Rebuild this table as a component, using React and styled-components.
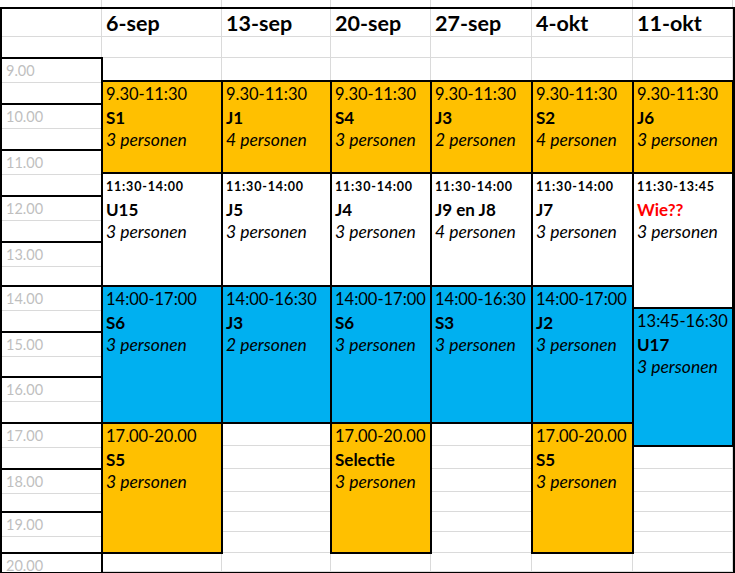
import styled, { createGlobalStyle } from "styled-components";

const GlobalStyle = createGlobalStyle`
  html, body {
    margin: 0;
    padding: 0;
    background: #fff;
  }
  body {
    font-family: Lato, "Open Sans", sans-serif;
    color: #000;
    overflow: hidden;
  }
`;

const GRID = "#dadada";
const COLS = "100px 120px 109px 100px 101px 101px 100px";
// heights of the half-hour rows, 9.00 down to 20.00
const ROWS = [23, 23, 23, 23, 23, 23, 23, 23, 21, 23, 22, 24, 23, 22, 23, 23, 23, 23, 23, 20, 20, 21, 19];
const FIRST = 3; // grid row of the 9.00 row

const tones = {
  orange: "#ffc000",
  white: "#ffffff",
  blue: "#00b0f0",
};

const hours = [9, 10, 11, 12, 13, 14, 15, 16, 17, 18, 19, 20];

const days = [
  {
    date: "6-sep",
    slots: [
      { tone: "orange", at: 1, span: 4, time: "9.30-11:30", who: "S1", count: "3 personen" },
      { tone: "white", at: 5, span: 5, time: "11:30-14:00", who: "U15", count: "3 personen" },
      { tone: "blue", at: 10, span: 6, time: "14:00-17:00", who: "S6", count: "3 personen" },
      { tone: "orange", at: 16, span: 6, time: "17.00-20.00", who: "S5", count: "3 personen" },
    ],
  },
  {
    date: "13-sep",
    slots: [
      { tone: "orange", at: 1, span: 4, time: "9.30-11:30", who: "J1", count: "4 personen" },
      { tone: "white", at: 5, span: 5, time: "11:30-14:00", who: "J5", count: "3 personen" },
      { tone: "blue", at: 10, span: 6, time: "14:00-16:30", who: "J3", count: "2 personen" },
    ],
  },
  {
    date: "20-sep",
    slots: [
      { tone: "orange", at: 1, span: 4, time: "9.30-11:30", who: "S4", count: "3 personen" },
      { tone: "white", at: 5, span: 5, time: "11:30-14:00", who: "J4", count: "3 personen" },
      { tone: "blue", at: 10, span: 6, time: "14:00-17:00", who: "S6", count: "3 personen" },
      { tone: "orange", at: 16, span: 6, time: "17.00-20.00", who: "Selectie", count: "3 personen" },
    ],
  },
  {
    date: "27-sep",
    slots: [
      { tone: "orange", at: 1, span: 4, time: "9.30-11:30", who: "J3", count: "2 personen" },
      { tone: "white", at: 5, span: 5, time: "11:30-14:00", who: "J9 en J8", count: "4 personen" },
      { tone: "blue", at: 10, span: 6, time: "14:00-16:30", who: "S3", count: "3 personen" },
    ],
  },
  {
    date: "4-okt",
    slots: [
      { tone: "orange", at: 1, span: 4, time: "9.30-11:30", who: "S2", count: "4 personen" },
      { tone: "white", at: 5, span: 5, time: "11:30-14:00", who: "J7", count: "3 personen" },
      { tone: "blue", at: 10, span: 6, time: "14:00-17:00", who: "J2", count: "3 personen" },
      { tone: "orange", at: 16, span: 6, time: "17.00-20.00", who: "S5", count: "3 personen" },
    ],
  },
  {
    date: "11-okt",
    slots: [
      { tone: "orange", at: 1, span: 4, time: "9.30-11:30", who: "J6", count: "3 personen" },
      { tone: "white", at: 5, span: 6, time: "11:30-13:45", who: "Wie??", alert: true, count: "3 personen" },
      { tone: "blue", at: 11, span: 6, time: "13:45-16:30", who: "U17", count: "3 personen" },
    ],
  },
];

export default function App() {
  return (
    <>
      <GlobalStyle />
      <TopStrip>
        {Array.from({ length: 7 }).map((_, i) => (
          <StripCell key={i} />
        ))}
      </TopStrip>
      <Sheet>
        <CornerCell $row={1} />
        <CornerCell $row={2} />

        {hours.map((h, i) => (
          <HourBox key={h} $row={FIRST + i * 2} $span={h === 20 ? 1 : 2}>
            <HalfRow $split={h !== 20}>
              <HourLabel>{h}.00</HourLabel>
            </HalfRow>
            {h !== 20 && <HalfRow />}
          </HourBox>
        ))}

        {days.map((day, d) => (
          <DayHead key={day.date} $col={d + 2}>
            {day.date}
          </DayHead>
        ))}
        {days.map((day, d) => (
          <Cell key={"b" + d} $col={d + 2} $row={2} />
        ))}
        {days.map((day, d) =>
          ROWS.map((_, r) => <Cell key={d + "-" + r} $col={d + 2} $row={FIRST + r} />)
        )}

        {days.map((day, d) =>
          day.slots.map((s) => (
            <Block key={day.date + s.at} $col={d + 2} $row={FIRST + s.at} $span={s.span} $tone={s.tone}>
              <TimeLine $compact={s.tone === "white"}>{s.time}</TimeLine>
              <WhoLine $alert={s.alert}>{s.who}</WhoLine>
              <CountLine>{s.count}</CountLine>
            </Block>
          ))
        )}
      </Sheet>
    </>
  );
}

const TopStrip = styled.div`
  display: grid;
  grid-template-columns: ${COLS};
  height: 7px;
  margin-left: 2px;
`;

const StripCell = styled.div`
  border-right: 1px solid ${GRID};
`;

const Sheet = styled.div`
  display: grid;
  grid-template-columns: ${COLS};
  grid-template-rows: 28px 21px ${ROWS.map((r) => r + "px").join(" ")};
  width: 731px;
  border: 2px solid #000;
`;

const Cell = styled.div`
  grid-column: ${(p) => p.$col};
  grid-row: ${(p) => p.$row};
  border-right: 1px solid ${GRID};
  border-bottom: 1px solid ${GRID};
`;

const CornerCell = styled.div`
  grid-column: 1;
  grid-row: ${(p) => p.$row};
  border-right: 1px solid ${GRID};
  border-bottom: 1px solid ${GRID};
`;

const DayHead = styled.div`
  grid-column: ${(p) => p.$col};
  grid-row: 1;
  border-right: 1px solid ${GRID};
  border-bottom: 1px solid ${GRID};
  padding-left: 4px;
  font-size: 21.5px;
  font-weight: 700;
  line-height: 28px;
  white-space: nowrap;
`;

const HourBox = styled.div`
  grid-column: 1;
  grid-row: ${(p) => p.$row} / span ${(p) => p.$span};
  margin: -1px -1px 0 0;
  border-top: 2px solid #000;
  border-right: 2px solid #000;
  display: flex;
  flex-direction: column;
  z-index: 2;
`;

const HalfRow = styled.div`
  flex: 1;
  border-bottom: ${(p) => (p.$split ? `1px solid ${GRID}` : "none")};
`;

const HourLabel = styled.div`
  padding: 1px 0 0 4px;
  font-size: 14.5px;
  line-height: 22px;
  color: #bfbfbf;
`;

const Block = styled.div`
  grid-column: ${(p) => p.$col};
  grid-row: ${(p) => p.$row} / span ${(p) => p.$span};
  margin: -1px;
  border: 2px solid #000;
  background: ${(p) => tones[p.$tone]};
  padding: 1px 0 0 3px;
  overflow: hidden;
  z-index: 1;
`;

const TimeLine = styled.div`
  font-size: ${(p) => (p.$compact ? "12.5px" : "16.5px")};
  font-weight: ${(p) => (p.$compact ? 700 : 400)};
  letter-spacing: ${(p) => (p.$compact ? "0.8px" : "0")};
  line-height: 23px;
  white-space: nowrap;
`;

const WhoLine = styled.div`
  font-size: 17px;
  font-weight: 700;
  line-height: 23px;
  white-space: nowrap;
  color: ${(p) => (p.$alert ? "#ff0000" : "#000")};
`;

const CountLine = styled.div`
  font-size: 17.5px;
  font-style: italic;
  line-height: 22px;
  white-space: nowrap;
`;
